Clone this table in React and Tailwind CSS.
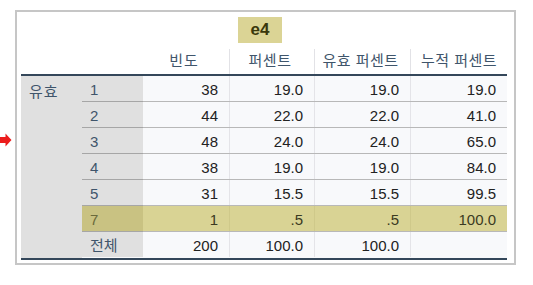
import React from "react";

const rows = [
  { k: "1", v: ["38", "19.0", "19.0", "19.0"] },
  { k: "2", v: ["44", "22.0", "22.0", "41.0"] },
  { k: "3", v: ["48", "24.0", "24.0", "65.0"] },
  { k: "4", v: ["38", "19.0", "19.0", "84.0"] },
  { k: "5", v: ["31", "15.5", "15.5", "99.5"] },
  { k: "7", v: ["1", ".5", ".5", "100.0"], hl: true },
  { k: "전체", v: ["200", "100.0", "100.0", ""], last: true },
];

const font = { fontFamily: '"Liberation Sans", "Noto Sans CJK KR", sans-serif' };

export default function App() {
  return (
    <div className="relative w-[533px] h-[285px] bg-white" style={font}>
      <svg className="absolute left-0 top-[133px]" width="12" height="14" viewBox="0 0 12 14">
        <polygon points="0,4 5.5,4 5.5,0.5 11.5,7 5.5,13.5 5.5,10 0,10" fill="#ec1c1c" />
      </svg>
      <div className="absolute left-[15px] top-[10px] w-[501px] h-[255px] border-2 border-[#c6c6c6] bg-white pl-[4px] pt-[5px]">
        <div className="w-[486px]">
          <div className="flex">
            <div className="ml-[217px] w-[44px] h-[26px] bg-[#dbd495] flex items-center justify-center text-[17px] font-bold text-[#3a380c]">
              e4
            </div>
          </div>
          <div className="mt-[5px] grid grid-cols-[61px_61px_86px_85px_96px_97px] h-[26px] text-[15px] text-[#3f556b]">
            <div />
            <div />
            <div className="flex items-center justify-center pr-[4px] tracking-[1px]">빈도</div>
            <div className="flex items-center justify-center pr-[4px] border-l border-[#e2e2e6] mt-[1px] tracking-[0.5px]">퍼센트</div>
            <div className="flex items-center justify-center pr-[4px] border-l border-[#e2e2e6] mt-[1px] tracking-[0.5px]">유효 퍼센트</div>
            <div className="flex items-center justify-center border-l border-[#e2e2e6] mt-[1px] tracking-[0.5px]">누적 퍼센트</div>
          </div>
          <div className="h-[2px] bg-[#34475a]" />
          <div className="flex">
            <div className="w-[61px] bg-[#e0e0e0] text-[15px] text-[#3f556b] pl-[8px] pt-[5px] tracking-[1px]">유효</div>
            <div className="flex flex-col">
              {rows.map((r, i) => (
                <div key={i} className="flex flex-col">
                  <div className="grid grid-cols-[61px_86px_85px_96px_97px] h-[25px] text-[15px]">
                    <div
                      className={
                        "flex items-center pl-[8px] pt-[3px] " +
                        (r.hl ? "bg-[#c9c282] text-[#6b6a3c]" : "bg-[#e0e0e0] text-[#3f556b]")
                      }
                    >
                      {r.k}
                    </div>
                    {r.v.map((c, j) => (
                      <div
                        key={j}
                        className={
                          "flex items-center justify-end pr-[11px] pt-[3px] " +
                          (j > 0 ? "border-l " : "") +
                          (r.hl
                            ? "bg-[#d9d394] text-[#3b3a22] border-[#cfc98a]"
                            : "bg-[#f8f9fb] text-[#222222] border-[#e4e4e8]")
                        }
                      >
                        {c}
                      </div>
                    ))}
                  </div>
                  {r.last ? (
                    <div className="h-px bg-[#f8f9fb]" />
                  ) : (
                    <div className="flex h-px">
                      <div className="w-[61px] bg-[#a6a6a6]" />
                      <div className="flex-1 bg-[#b8b8b8]" />
                    </div>
                  )}
                </div>
              ))}
            </div>
          </div>
          <div className="h-[2px] bg-[#34475a]" />
        </div>
      </div>
    </div>
  );
}
